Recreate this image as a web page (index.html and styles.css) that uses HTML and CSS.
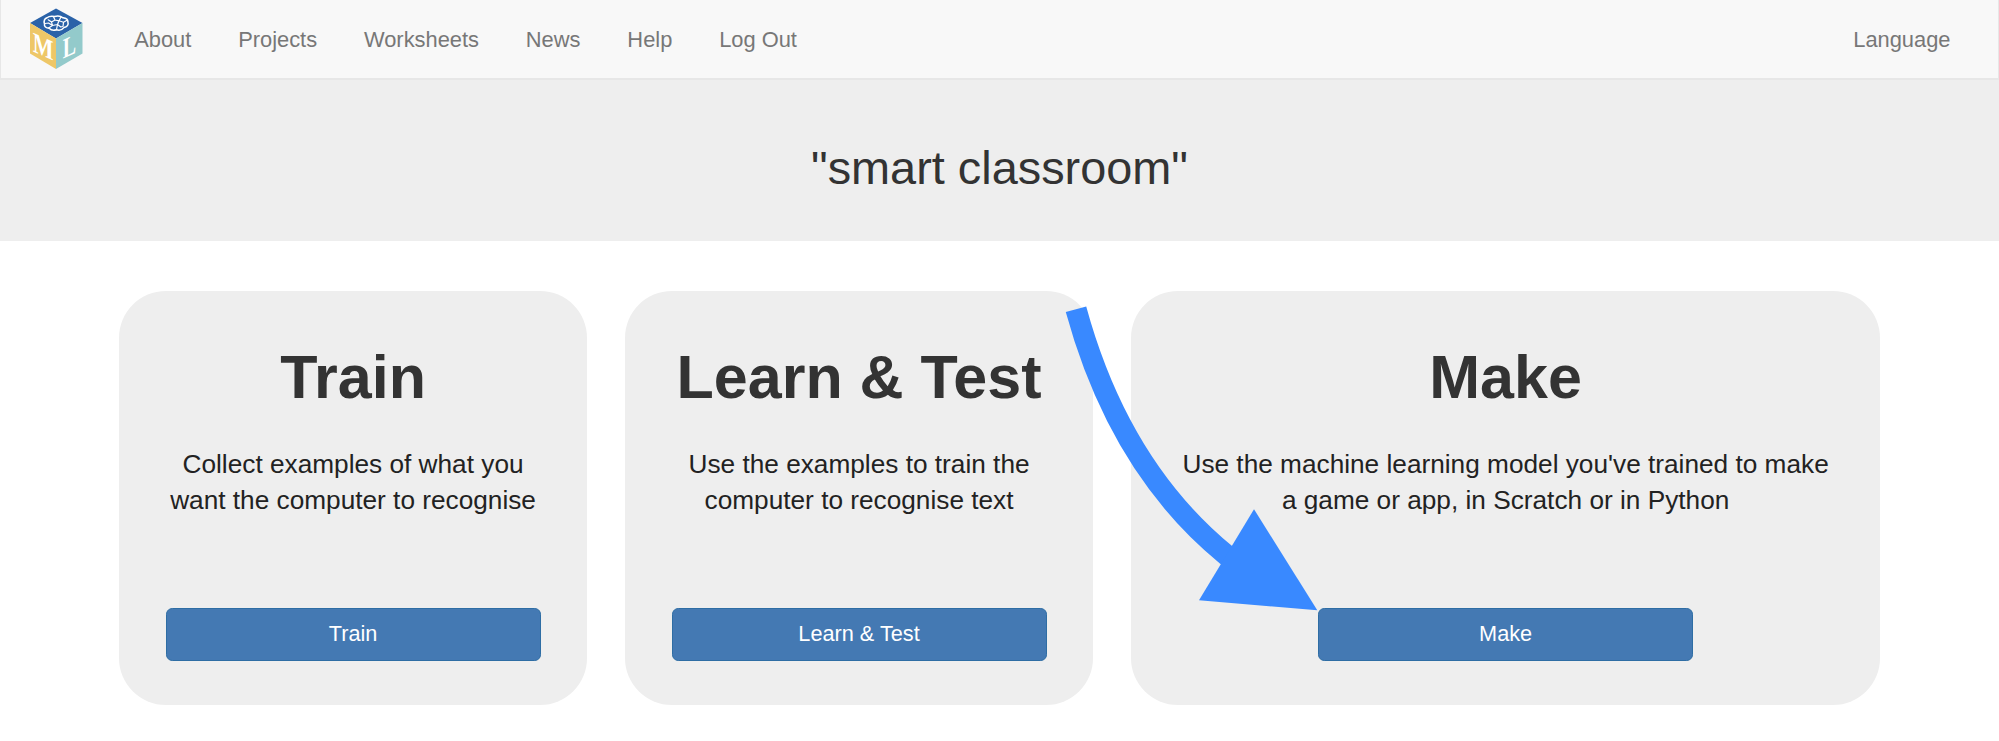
FILE: index.html
```html
<!DOCTYPE html>
<html lang="en">
<head>
<meta charset="utf-8">
<title>smart classroom</title>
<link rel="stylesheet" href="styles.css">
</head>
<body>
<nav class="navbar">
  <a class="brand">
    <svg class="logo" viewBox="0 0 54 62">
      <polygon points="27,0.5 53.500,15 27,30.5 1,15" fill="#2a62a8"/>
      <polygon points="1,15 27,30.5 27,61 1,45.5" fill="#eec767"/>
      <polygon points="53.500,15 27,30.5 27,61 53.500,45.5" fill="#93cacb"/>
      <g fill="none" stroke="#fff" stroke-width="1.200" stroke-linecap="round" stroke-linejoin="round">
        <path stroke-width="1.500" d="M18 9.800c2-1.700 5-1.900 7.500-1.300 3-.8 6.500-.3 8.500 1.300 3 .3 5 2 4.900 4.300 1 2.500-.8 5-4 5.500-1.500 2-4.700 3-7.400 2.200-2.500.8-5.800.2-7.300-1.500-3.200 0-5.200-2-4.700-4.300-.8-2.700-.2-5.200 2.500-6.200z"/>
        <path d="M24.500 8.700l1.500 3.300-3.500 2-3.300-2.200M22.500 14l1 3.500-4 2.500M16 15.500l3.500-.5 4 2.500M26 12l4 .8 2-3.800M30 12.800l-1.500 3.700-5 1M28.500 16.500l3 2.300M27.500 21.500l1-5M30 12.800l4.500 1.500 3.500-2M34.500 14.300l-.5 4.200-2.500.3"/>
      </g>
      <text class="block-letter" transform="matrix(.77 .35 0 1 14 48)">M</text>
      <text class="block-letter" transform="matrix(.7 -.32 0 1 40.500 47.800)">L</text>
    </svg>
  </a>
  <div class="links">
    <a>About</a><a>Projects</a><a>Worksheets</a><a>News</a><a>Help</a><a>Log Out</a>
  </div>
  <a class="language">Language</a>
</nav>
<header class="hero"><h2 class="hero-title">"smart classroom"</h2></header>
<main class="cards">
  <section class="card">
    <h1 class="card-title">Train</h1>
    <p class="card-text">Collect examples of what you<br>want the computer to recognise</p>
    <button class="btn">Train</button>
  </section>
  <section class="card">
    <h1 class="card-title">Learn &amp; Test</h1>
    <p class="card-text">Use the examples to train the<br>computer to recognise text</p>
    <button class="btn">Learn &amp; Test</button>
  </section>
  <section class="card card-wide">
    <h1 class="card-title">Make</h1>
    <p class="card-text">Use the machine learning model you've trained to make<br>a game or app, in Scratch or in Python</p>
    <button class="btn">Make</button>
  </section>
</main>
<svg class="arrow" viewBox="1060 300 260 320">
  <path d="M1076 309.300Q1119.300 467.500 1226.300 555L1236 562" fill="none" stroke="#3989ff" stroke-width="21.200"/>
  <polygon points="1254,509.300 1199,600.300 1317.300,610.300" fill="#3989ff"/>
</svg>
</body>
</html>
```

FILE: styles.css
```css
* { box-sizing: border-box; }

body {
  margin: 0;
  height: 741px;
  overflow: hidden;
  background: #fff;
  color: #333;
  font-family: "Liberation Sans", Arial, sans-serif;
}

.navbar {
  display: flex;
  align-items: center;
  height: 80px;
  padding: 0 47.5px 0 28px;
  background: #f8f8f8;
  border: 1px solid #e7e7e7;
  border-top-width: 0;
  border-bottom-width: 2px;
  font-size: 21.86px;
  line-height: 22px;
  color: #777;
}

.brand { width: 54px; height: 62px; }
.logo { display: block; width: 54px; height: 62px; }

.block-letter {
  font: bold 28.5px "Liberation Serif", serif;
  fill: #fff;
  text-anchor: middle;
}

.links {
  display: flex;
  flex: 1;
  gap: 46.85px;
  padding: 1px 0 0 51.2px;
}

.language { padding-top: 1px; }

.hero {
  height: 160.5px;
  padding-top: 62.3px;
  background: #eee;
}

.hero-title {
  margin: 0;
  font-size: 46.86px;
  font-weight: 400;
  line-height: 52px;
  text-align: center;
}

.cards {
  display: flex;
  gap: 37.5px;
  padding: 50px 0 0 118.8px;
}

.card {
  display: flex;
  flex-direction: column;
  align-items: center;
  width: 468.5px;
  height: 414px;
  padding-top: 53.5px;
  background: #eee;
  border-radius: 46.8px;
  text-align: center;
}

.card-wide { width: 749.6px; }

.card-title {
  margin: 0 0 35px;
  font-size: 61px;
  font-weight: 700;
  line-height: 67px;
}

.card-text {
  margin: 0 0 89.5px;
  font-size: 26.22px;
  line-height: 36px;
  color: #222;
  white-space: nowrap;
}

.btn {
  width: 375px;
  height: 53px;
  padding: 0;
  background: #4479b3;
  border: 1px solid #2e6da4;
  border-radius: 6.25px;
  font-family: inherit;
  font-size: 21.7px;
  color: #fff;
}

.arrow {
  position: absolute;
  left: 1060px;
  top: 300px;
  width: 260px;
  height: 320px;
}
```
